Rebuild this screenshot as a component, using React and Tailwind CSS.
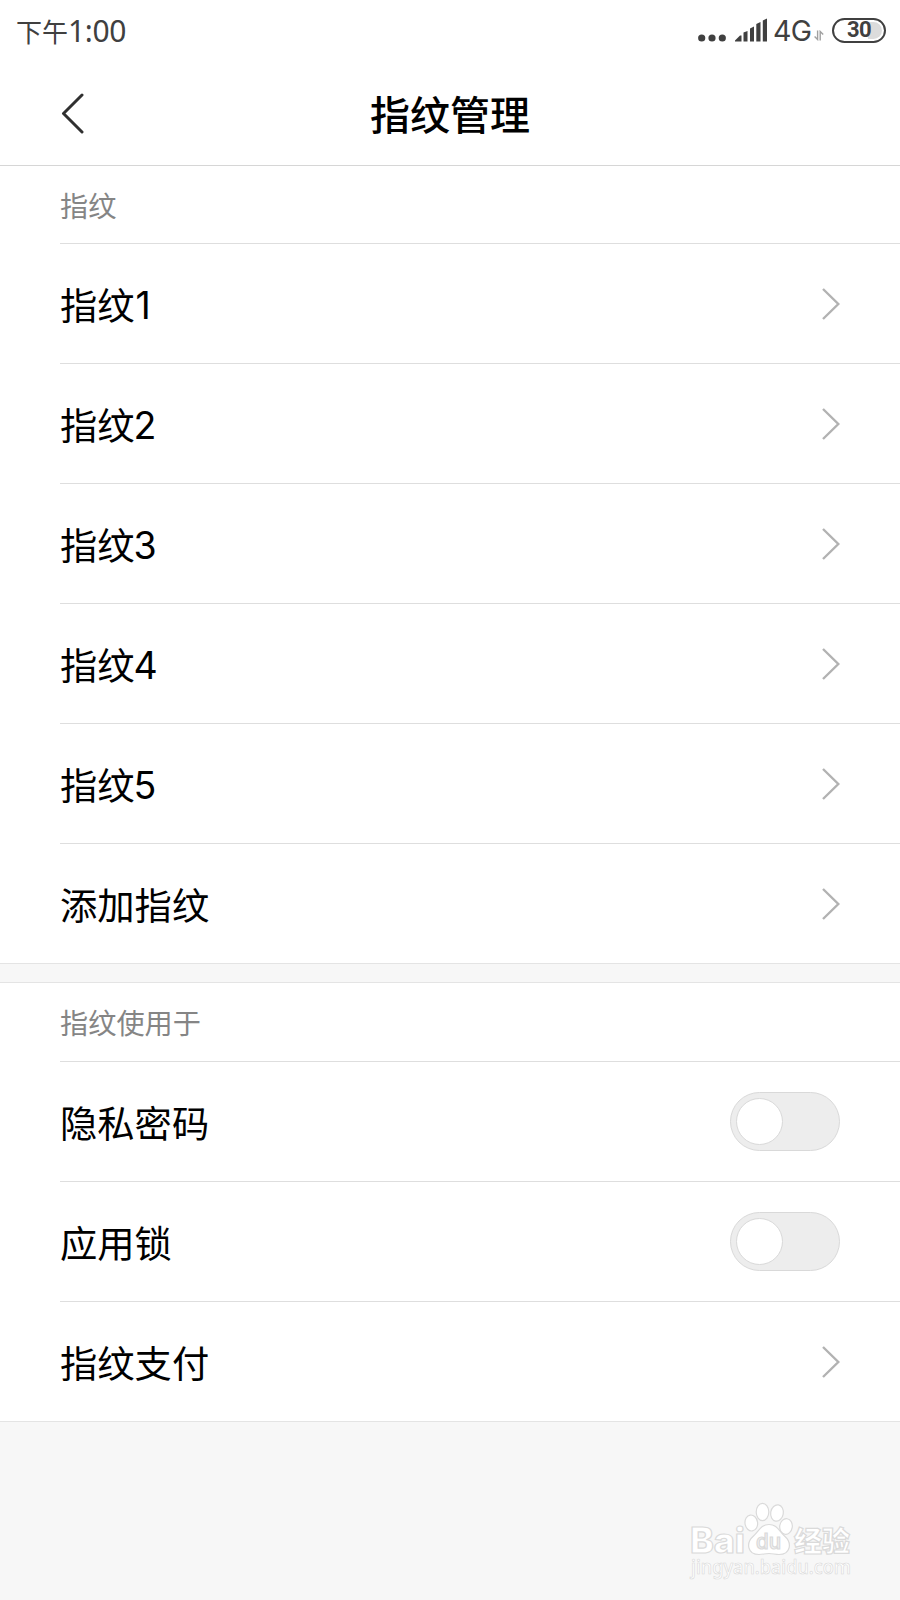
import { useState } from "react";

const fingerprints = ["指纹1", "指纹2", "指纹3", "指纹4", "指纹5"];

function StatusBar() {
  return (
    <div className="flex h-[60px] items-center justify-between pl-4 pr-[14px] text-[#404040]">
      <div className="flex items-center pt-px leading-[60px]">
        <span className="font-['Noto_Sans_CJK_SC',sans-serif] text-[26px]">下午</span>
        <span className="font-['Noto_Sans',sans-serif] text-[30px] tracking-[-0.4px]">1:00</span>
      </div>
      <div className="flex items-center">
        <svg width="28" height="8" viewBox="0 0 28 8" className="mt-[15px] mr-[9px]" fill="#404040">
          <circle cx="3.7" cy="4" r="3.6" />
          <circle cx="14" cy="4" r="3.6" />
          <circle cx="24.3" cy="4" r="3.6" />
        </svg>
        <svg width="33" height="24" viewBox="0 0 33 24" className="mr-[5px]" fill="#404040">
          <path d="M0 23.5 V22.5 L5 17.5 H6.5 V23.5 Z" />
          <path d="M8.5 14.5 L12.5 13 V23.5 H8.5 Z" />
          <path d="M15 10.5 L19 8.5 V23.5 H15 Z" />
          <path d="M21.3 6 L25.5 4 V23.5 H21.3 Z" />
          <path d="M27.8 2.5 L32 0.5 V23.5 H27.8 Z" />
        </svg>
        <span className="w-[39px] pt-px font-['Inter',sans-serif] text-[28.5px] leading-[60px] tracking-[-0.7px]">4G</span>
        <svg width="10" height="11" viewBox="0 0 10 11" className="mt-[10px] mr-[8px] ml-[2px]" fill="none" stroke="#a0a0a0" strokeWidth="1.4">
          <path d="M3.6 0.5 V9.5 L0.6 6.5 M6.2 10.5 V1.5 L9.2 4.5" />
        </svg>
        <div className="flex h-[25px] w-[54px] rounded-full border-[2.5px] border-[#404040] p-[2px]">
          <div className="flex flex-1 items-center justify-center rounded-full bg-linear-to-r from-white from-70% to-[#dcdcdc] to-70% font-['Roboto',sans-serif] text-[22px] leading-none font-bold tracking-[-0.5px]">
            30
          </div>
        </div>
      </div>
    </div>
  );
}

function Chevron() {
  return (
    <svg width="20" height="32" viewBox="0 0 20 32" fill="none" stroke="#b2b2b2" strokeWidth="2.4">
      <path d="M3 1 L18.3 16 L3 31" />
    </svg>
  );
}

function Switch() {
  const [on, setOn] = useState(false);
  return (
    <button
      onClick={() => setOn(!on)}
      className={
        "flex h-[59px] w-[110px] items-center rounded-full border border-[#d9d9d9] px-[5px] " +
        (on ? "justify-end bg-[#3482ff]" : "bg-[#ededed]")
      }
    >
      <span className="size-[47px] rounded-full border border-[#d9d9d9] bg-white" />
    </button>
  );
}

function Row({ label, last, children }) {
  const m = label.match(/^(\D+)(\d*)$/);
  return (
    <div className={"ml-[60px] flex items-center justify-between pr-[60px] text-[37.3px] text-black " + (last ? "h-[119px]" : "h-[120px] border-b border-[#dedede]")}>
      <div className="flex items-center leading-[60px]">
        <span className="pt-px font-['Noto_Sans_CJK_SC',sans-serif]">{m[1]}</span>
        {m[2] && (
          <span className={"pt-[4px] font-['Inter',sans-serif] text-[37.5px] font-normal tracking-[-1px] " + (m[2] === "1" ? "ml-px" : "-ml-px")}>{m[2]}</span>
        )}
      </div>
      {children || <Chevron />}
    </div>
  );
}

function SectionTitle({ children, tall }) {
  return (
    <div className={"ml-[60px] flex items-center border-b border-[#dedede] font-['Noto_Sans_CJK_SC',sans-serif] text-[28.2px] text-[#858585] " + (tall ? "h-[79px]" : "h-[78px] pt-[2px]")}>
      {children}
    </div>
  );
}

function Watermark() {
  return (
    <svg width="170" height="94" viewBox="0 0 170 94" className="absolute right-[44px] bottom-[12px] overflow-visible" fill="#fff" stroke="#dadada" strokeWidth="1.2">
      <text x="4" y="59" fontFamily="Inter" fontWeight="800" fontSize="35" textLength="55" lengthAdjust="spacingAndGlyphs">Bai</text>
      <ellipse cx="65.3" cy="29" rx="6.3" ry="8" transform="rotate(-8 65.3 29)" />
      <ellipse cx="76.5" cy="18" rx="6.3" ry="8.6" />
      <ellipse cx="91" cy="19" rx="6.3" ry="8.2" transform="rotate(10 91 19)" />
      <ellipse cx="100" cy="32.5" rx="6.3" ry="7.8" transform="rotate(8 100 32.5)" />
      <path d="M83 30.5 C75 30.5 73 37 67.5 42 C59.500 49 61.500 60.500 73 60.500 C77 60.500 79 59.500 83 59.500 C87 59.500 89 60.500 93 60.500 C104.500 60.500 106.500 49 98.500 42 C93 37 91 30.5 83 30.5 Z" />
      <text x="70" y="55" fontFamily="Inter" fontWeight="500" fontSize="21" textLength="25" lengthAdjust="spacingAndGlyphs" fill="#f4f4f4">du</text>
      <text x="108" y="58" fontFamily="Noto Sans CJK SC" fontWeight="900" fontSize="28" textLength="56">经验</text>
      <text x="5" y="80" fontFamily="Noto Sans" fontWeight="500" fontSize="20" textLength="160" lengthAdjust="spacingAndGlyphs" strokeWidth="0.7">jingyan.baidu.com</text>
    </svg>
  );
}

export default function App() {
  return (
    <div className="relative h-[1600px] w-[900px] bg-[#f7f7f7]">
      <div className="h-[166px] border-b border-[#d6d6d6] bg-white">
        <StatusBar />
        <div className="grid h-[105px] grid-cols-[1fr_auto_1fr] items-center pl-[60px]">
          <button className="w-fit">
            <svg width="26" height="42" viewBox="0 0 26 42" fill="none" stroke="#303030" strokeWidth="3" strokeLinecap="round" strokeLinejoin="round">
              <path d="M22 3 L3.5 21.5 L22 40" />
            </svg>
          </button>
          <h1 className="pr-[60px] font-['Noto_Sans_CJK_SC',sans-serif] text-[40px] leading-[60px] font-medium text-black">指纹管理</h1>
        </div>
      </div>

      <div className="bg-white">
        <SectionTitle>指纹</SectionTitle>
        {fingerprints.map((f) => (
          <Row key={f} label={f} />
        ))}
        <Row label="添加指纹" last />
      </div>

      <div className="h-5 border-y border-[#e4e4e4]" />

      <div className="bg-white">
        <SectionTitle tall>指纹使用于</SectionTitle>
        <Row label="隐私密码">
          <Switch />
        </Row>
        <Row label="应用锁">
          <Switch />
        </Row>
        <Row label="指纹支付" last />
      </div>
      <div className="border-t border-[#e4e4e4]" />

      <Watermark />
    </div>
  );
}
